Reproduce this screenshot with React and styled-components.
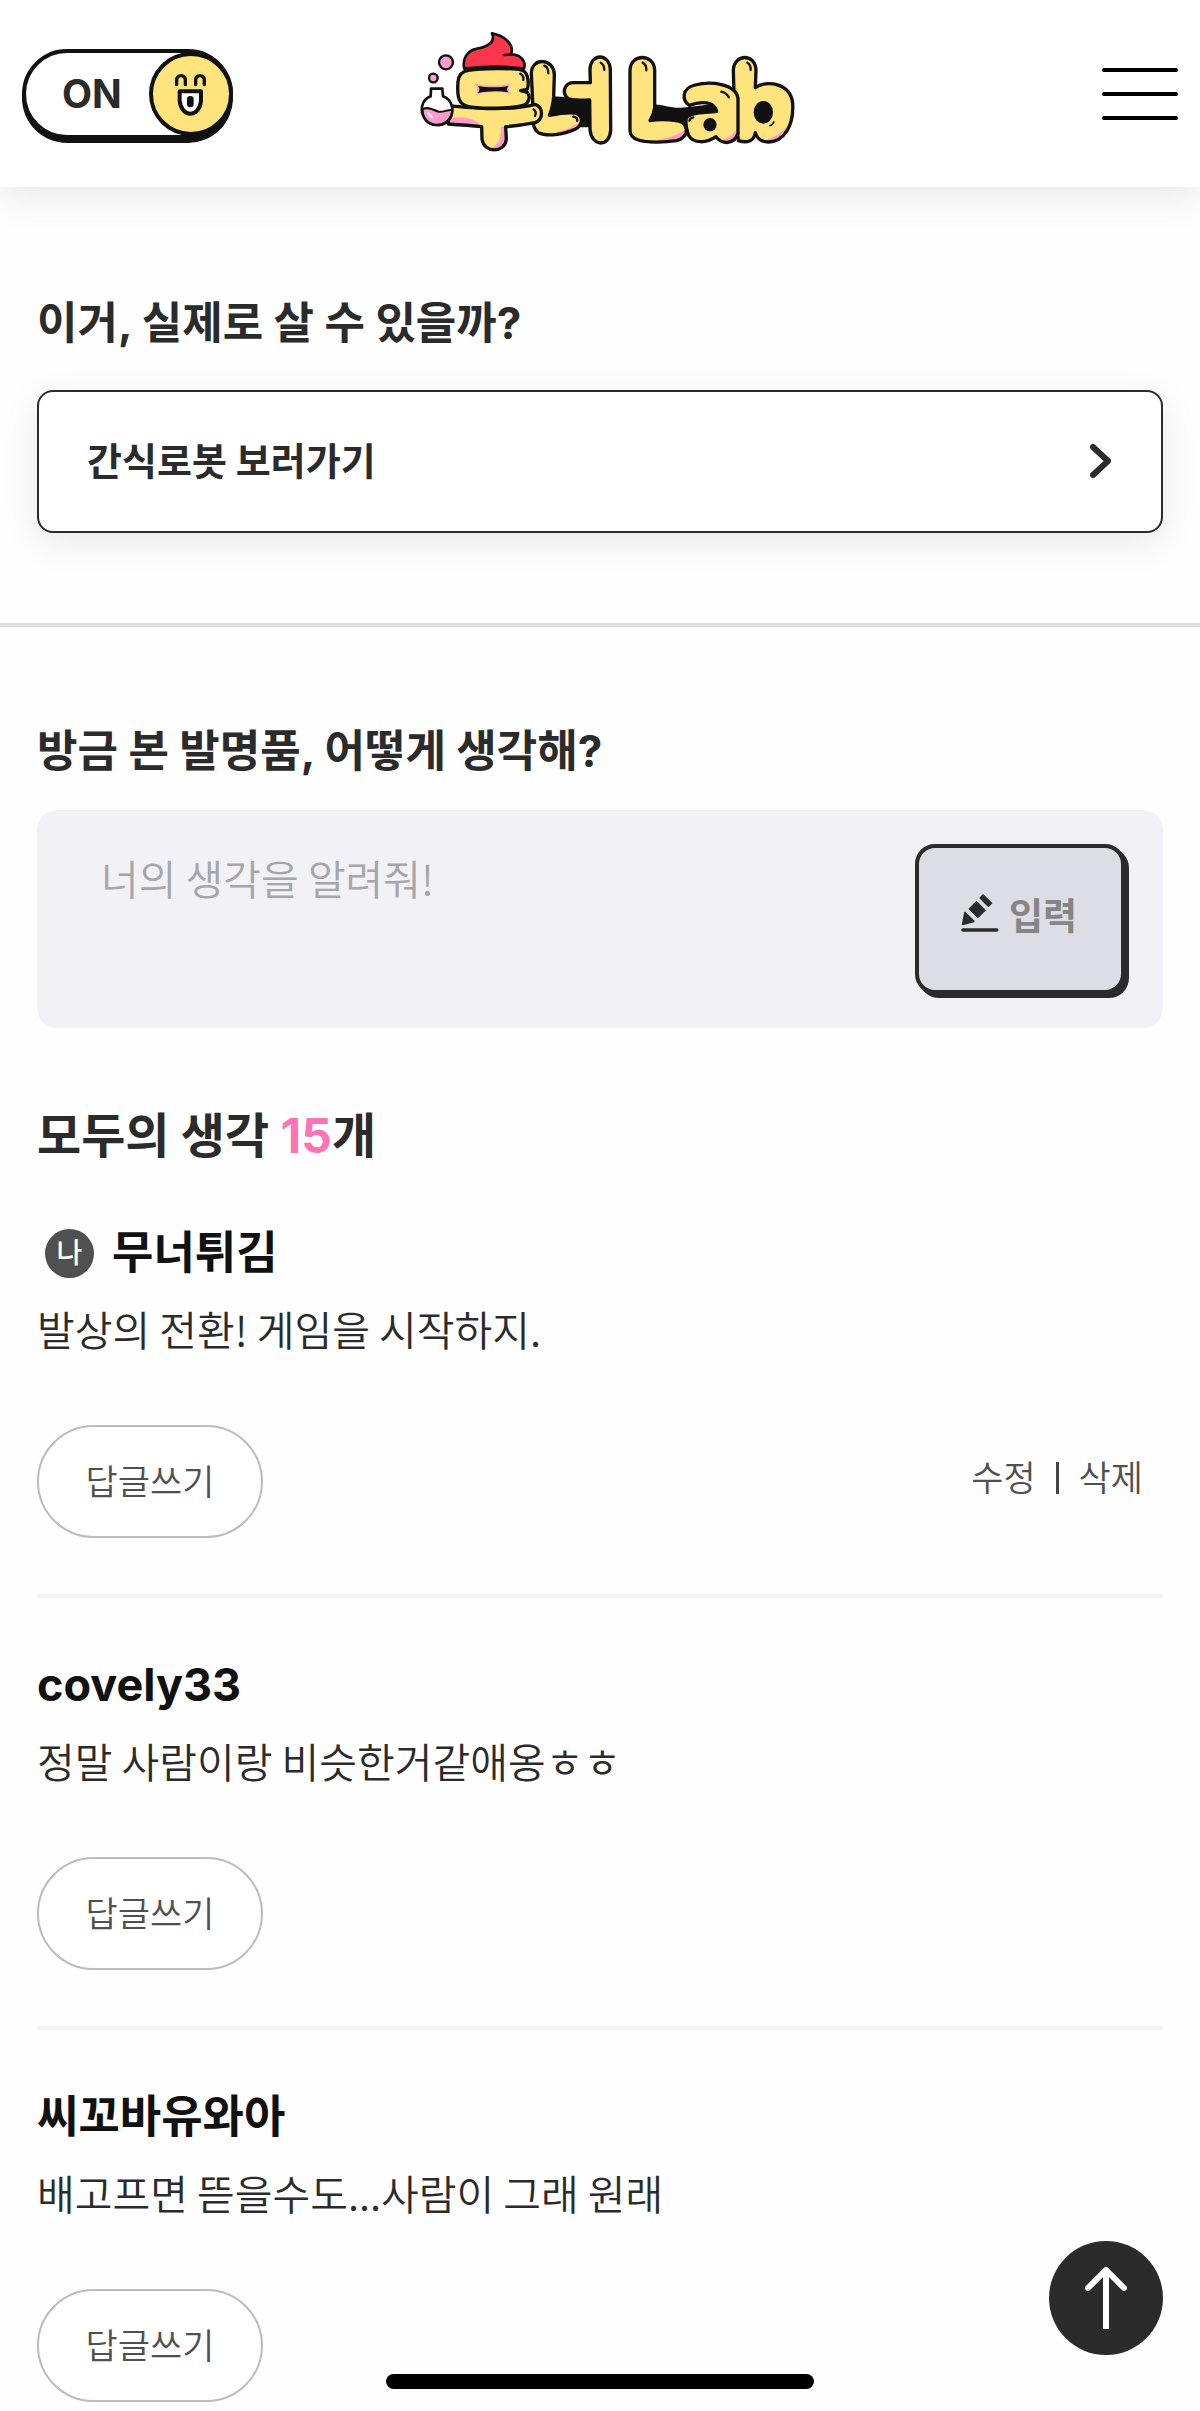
import React from "react";
import styled, { createGlobalStyle } from "styled-components";

const ink = "#2b2b2b";
const black = "#111111";
const yellow = "#ffe47e";
const pink = "#ff9ccb";

const GlobalStyle = createGlobalStyle`
  *, *::before, *::after { box-sizing: border-box; }
  body {
    margin: 0;
    background: #fefefe;
    color: ${ink};
    font-family: Inter, "Noto Sans CJK KR", sans-serif;
  }
  button, textarea { font-family: inherit; }
  button { cursor: pointer; margin: 0; line-height: 48px; }
`;

const Header = styled.header`
  display: grid;
  grid-template-columns: 1fr auto 1fr;
  align-items: center;
  height: 187px;
  padding: 0 22px;
  background: #fff;
  box-shadow: 0 10px 36px rgba(0, 0, 0, 0.09);
`;

const Toggle = styled.button`
  display: flex;
  align-items: center;
  justify-content: space-between;
  justify-self: start;
  width: 211px;
  height: 90px;
  padding: 0 0 0 36px;
  border: 4px solid ${black};
  border-radius: 45px;
  background: #fff;
  box-shadow: 0 4px 0 ${black};
  color: ${ink};
  font-size: 39px;
  font-weight: 700;
`;

const Knob = styled.span`
  display: flex;
  align-items: center;
  justify-content: center;
  width: 84px;
  height: 84px;
  margin-right: -4px;
  border: 4px solid ${black};
  border-radius: 50%;
  background: ${yellow};
`;

const MenuButton = styled.button`
  justify-self: end;
  display: flex;
  padding: 0;
  border: 0;
  background: none;
`;

const Section = styled.section`
  padding: ${(p) => p.$top}px 37px ${(p) => p.$bottom}px;
  border-bottom: ${(p) => (p.$divided ? "4px solid #e0e0e0" : "0")};
`;

const Title = styled.h2`
  margin: 0;
  font-size: ${(p) => (p.$large ? 48 : 44)}px;
  line-height: 60px;
  font-weight: 700;
`;

const Count = styled.span`
  color: #ff74b5;
`;

const LinkCard = styled.a`
  display: flex;
  align-items: center;
  justify-content: space-between;
  height: 143px;
  margin-top: 37px;
  padding: 0 48px 2px;
  border: 2px solid ${ink};
  border-radius: 16px;
  background: #fff;
  box-shadow: 0 10px 36px rgba(0, 0, 0, 0.09);
  color: ${ink};
  font-size: 38px;
  line-height: 48px;
  font-weight: 700;
  text-decoration: none;
`;

const Composer = styled.form`
  display: flex;
  align-items: flex-start;
  gap: 24px;
  height: 218px;
  margin: 29px 0 78px;
  padding: 34px 38px 34px 64px;
  border-radius: 20px;
  background: #f2f1f6;
`;

const Field = styled.textarea`
  flex: 1;
  min-width: 0;
  height: 150px;
  padding: 3px 0;
  border: 0;
  outline: 0;
  resize: none;
  background: transparent;
  color: ${ink};
  font-family: "Noto Sans CJK KR", sans-serif;
  font-size: 41px;
  font-weight: 350;
  line-height: 60px;
  &::placeholder { color: #a6a6a8; opacity: 1; }
`;

const Submit = styled.button`
  display: flex;
  align-items: center;
  justify-content: center;
  gap: 10px;
  width: 210px;
  height: 150px;
  padding: 0 2px 4px 0;
  border: 4px solid ${ink};
  border-radius: 20px;
  background: #dddde5;
  box-shadow: 4px 4px 0 ${ink};
  color: #858585;
  font-size: 37px;
  font-weight: 700;
`;

const PencilIcon = styled.svg`
  margin-bottom: 8px;
`;

const List = styled.ul`
  margin: 0;
  padding: 0;
  list-style: none;
`;

const Item = styled.li`
  padding: 57px 0 56px;
  border-bottom: 4px solid #f2f1f6;
  &:last-child { padding-bottom: 8px; border-bottom: 0; }
`;

const Author = styled.h3`
  display: flex;
  align-items: center;
  gap: 18px;
  margin: 0;
  color: ${black};
  font-size: 45px;
  line-height: 60px;
  font-weight: 700;
`;

const MeBadge = styled.span`
  display: flex;
  align-items: center;
  justify-content: center;
  width: 49px;
  height: 49px;
  margin-left: 8px;
  border-radius: 50%;
  background: #505050;
  color: #fff;
  font-size: 28px;
  line-height: 28px;
  font-weight: 500;
`;

const Message = styled.p`
  margin: 15px 0 67px;
  font-family: "Noto Sans CJK KR", sans-serif;
  font-size: 41px;
  line-height: 60px;
  font-weight: 350;
`;

const ItemFooter = styled.div`
  display: flex;
  align-items: center;
  justify-content: space-between;
`;

const Reply = styled.button`
  width: 226px;
  height: 113px;
  padding: 0;
  border: 2px solid #bcbcbc;
  border-radius: 57px;
  background: #fff;
  color: #505050;
  font-size: 35px;
  font-weight: 350;
`;

const Actions = styled.div`
  display: flex;
  align-items: center;
  gap: 20px;
  padding: 0 20px 8px 0;
`;

const Action = styled.button`
  padding: 0;
  border: 0;
  background: none;
  color: #505050;
  font-size: 35px;
  font-weight: 350;
`;

const Bar = styled.span`
  width: 3px;
  height: 32px;
  background: #444;
`;

const TopButton = styled.button`
  position: fixed;
  right: 37px;
  bottom: 56px;
  display: flex;
  align-items: center;
  justify-content: center;
  width: 114px;
  height: 114px;
  padding: 0;
  border: 0;
  border-radius: 50%;
  background: ${ink};
`;

const HomeIndicator = styled.div`
  position: fixed;
  left: 50%;
  bottom: 22px;
  width: 428px;
  height: 15px;
  margin-left: -214px;
  border-radius: 8px;
  background: #000;
`;

function Bubble({ d, children }) {
  return (
    <g>
      <path d={d} fill={yellow} />
      {children}
      <path d={d} fill="none" stroke={black} strokeWidth="10" strokeLinejoin="round" />
    </g>
  );
}

function Shine({ d }) {
  return <path d={d} fill="none" stroke={black} strokeWidth="7" strokeLinecap="round" />;
}

function Logo() {
  return (
    <svg width="394" height="128" viewBox="9 30 1182 384" role="img" aria-label="무너 Lab">
      <path d="M458 230C490 226 520 240 574 240V322H540L450 290Z" fill={black} />
      <path d="M760 254C785 250 810 268 860 262L960 250V285L870 300L850 312L745 304Z" fill={black} />
      <Bubble d="M400 290L394 160C394 112 462 112 463 165L461 230C459 258 455 270 448 286C480 280 520 274 535 283C552 295 545 318 525 328C490 345 440 350 415 338C400 328 398 310 400 290Z">
        <path d="M470 336C505 326 530 318 540 302C550 325 520 340 470 342Z" fill={pink} />
      </Bubble>
      <Shine d="M433 137Q445 142 445 160" />
      <Shine d="M520 290Q533 292 532 303" />
      <Bubble d="M571 188L570 150C570 98 630 98 631 150L632 330C630 382 576 382 570 330L569 240C545 240 510 244 500 232C484 212 498 188 520 188Z" />
      <Shine d="M602 128Q613 134 613 150" />
      <Bubble d="M145 257C200 262 240 266 285 266C330 266 370 262 405 253C430 260 432 298 405 308C375 314 345 318 317 320L319 358C314 400 252 400 246 358L245 320C205 316 175 314 145 312Z">
        <path d="M140 296C180 288 232 292 243 320L140 313Z" fill={pink} />
        <path d="M302 320H320V355C316 382 295 388 270 386C298 374 306 350 302 320Z" fill={pink} />
      </Bubble>
      <Shine d="M401 268Q411 275 405 288" />
      <Bubble d="M205 151C250 144 335 144 365 150C388 157 386 195 382 208L362 212L382 217C392 228 388 248 372 255C340 266 240 268 200 258C170 250 172 215 174 185C176 165 185 154 205 151Z" />
      <path d="M222 190C250 200 305 200 332 190C323 202 323 210 334 221C305 213 250 214 226 226C235 211 234 202 222 190Z" fill={pink} />
      <path d="M232 197C260 203 300 203 326 198C319 205 320 210 326 217C296 211 260 213 233 219C241 210 240 204 232 197Z" fill={black} />
      <Shine d="M361 161Q372 167 370 180" />
      <path d="M193 146C186 118 200 92 232 86C262 80 288 66 276 40C310 46 345 72 333 103C355 103 380 118 372 146C320 138 245 140 193 146Z" fill="#fb364c" stroke={black} strokeWidth="8" strokeLinejoin="round" />
      <path d="M335 103L312 105" stroke={black} strokeWidth="8" strokeLinecap="round" />
      <circle cx="138" cy="127" r="21" fill={pink} stroke={black} strokeWidth="7" />
      <circle cx="100" cy="174" r="13" fill={pink} stroke={black} strokeWidth="7" />
      <path d="M93 206H127L129 229C155 238 165 270 150 294C132 322 90 322 73 294C57 266 68 238 92 229Z" fill="#fff" />
      <path d="M68 268C85 258 100 270 115 275C130 278 142 268 156 270C158 300 138 316 111 316C85 315 66 298 68 268Z" fill={pink} stroke={black} strokeWidth="6" />
      <path d="M93 206H127L129 229C155 238 165 270 150 294C132 322 90 322 73 294C57 266 68 238 92 229Z" fill="none" stroke={black} strokeWidth="8" strokeLinejoin="round" />
      <path d="M85 280L96 292" stroke="#fff" strokeWidth="6" strokeLinecap="round" />
      <Bubble d="M690 330L690 150C692 100 762 100 764 150L764 262C762 280 757 290 750 302C780 296 840 298 852 312C868 335 855 355 830 362C790 368 740 368 715 360C695 354 690 345 690 330Z">
        <path d="M750 362C800 358 835 346 856 328C862 355 835 370 750 368Z" fill={pink} />
      </Bubble>
      <Shine d="M728 128Q740 134 739 151" />
      <Bubble d="M1002 225L1000 150C1003 100 1066 100 1068 150L1066 203C1100 178 1172 190 1178 250C1182 320 1150 366 1105 366C1085 366 1070 355 1066 338C1062 364 1040 370 1015 362Z">
        <path d="M1083 364C1125 355 1158 330 1172 303C1165 350 1135 372 1083 364Z" fill={pink} />
      </Bubble>
      <ellipse cx="1090" cy="277" rx="29" ry="34" fill={black} />
      <Shine d="M1042 128Q1053 134 1052 150" />
      <path d="M1108 318Q1120 313 1122 304" fill="none" stroke={black} strokeWidth="5" />
      <Bubble d="M868 256C845 240 845 205 885 195C930 183 1008 190 1014 235L1014 340C1004 374 965 375 948 350C920 370 880 372 865 345C860 325 852 305 862 290C885 272 920 280 950 274C944 242 900 244 868 256Z">
        <path d="M960 362C985 355 1000 345 1010 328V362L980 371Z" fill={pink} />
      </Bubble>
      <circle cx="930" cy="314" r="20" fill={black} />
      <Shine d="M964 215Q980 219 986 232" />
      <Shine d="M868 302Q871 293 880 292" />
    </svg>
  );
}

function Face() {
  return (
    <svg width="34" height="44" viewBox="0 0 102 132" fill="none" stroke={black} strokeLinecap="round" aria-hidden="true">
      <path d="M8 38V25C8 6 34 6 34 25V38M65 38V25C65 6 91 6 91 25V38" strokeWidth="10" />
      <path d="M17 58H81V86C77 138 21 138 17 86Z" fill="#fff" strokeWidth="12" strokeLinejoin="round" />
      <path d="M49 82V96" strokeWidth="20" />
    </svg>
  );
}

function Pencil() {
  return (
    <PencilIcon width="38" height="38" viewBox="305 338 115 115" fill={ink} stroke={ink} strokeWidth="5" strokeLinejoin="round" aria-hidden="true">
      <path d="M317 394L344 421L310 430Z" />
      <path d="M352 360L379 387L356 410L329 383Z" strokeWidth="3" />
      <path d="M372 341L397 366L388 375L363 350Z" />
      <rect x="308" y="444" width="108" height="6" rx="3" />
    </PencilIcon>
  );
}

const comments = [
  { author: "무너튀김", text: "발상의 전환! 게임을 시작하지.", mine: true },
  { author: "covely33", text: "정말 사람이랑 비슷한거같애옹ㅎㅎ" },
  { author: "씨꼬바유와아", text: "배고프면 뜯을수도...사람이 그래 원래" },
];

function Comment({ author, text, mine }) {
  return (
    <Item>
      <Author>
        {mine && <MeBadge>나</MeBadge>}
        {author}
      </Author>
      <Message>{text}</Message>
      <ItemFooter>
        <Reply type="button">답글쓰기</Reply>
        {mine && (
          <Actions>
            <Action type="button">수정</Action>
            <Bar />
            <Action type="button">삭제</Action>
          </Actions>
        )}
      </ItemFooter>
    </Item>
  );
}

export default function App() {
  return (
    <>
      <GlobalStyle />
      <Header>
        <Toggle type="button" role="switch" aria-checked="true">
          ON
          <Knob>
            <Face />
          </Knob>
        </Toggle>
        <Logo />
        <MenuButton type="button" aria-label="메뉴">
          <svg width="76" height="54" viewBox="0 0 76 54" stroke="#000" strokeWidth="4" strokeLinecap="round" aria-hidden="true">
            <path d="M2 3H74M2 27H74M2 51H74" />
          </svg>
        </MenuButton>
      </Header>
      <main>
        <Section $top={106} $bottom={90} $divided>
          <Title>이거, 실제로 살 수 있을까?</Title>
          <LinkCard href="#robot">
            간식로봇 보러가기
            <svg width="24" height="36" viewBox="0 0 24 36" fill="none" stroke={ink} strokeWidth="6" strokeLinecap="round" strokeLinejoin="round" aria-hidden="true">
              <path d="M4 4L19 18L4 32" />
            </svg>
          </LinkCard>
        </Section>
        <Section $top={94} $bottom={0}>
          <Title as="label" htmlFor="opinion">방금 본 발명품, 어떻게 생각해?</Title>
          <Composer onSubmit={(e) => e.preventDefault()}>
            <Field id="opinion" placeholder="너의 생각을 알려줘!" />
            <Submit type="submit">
              <Pencil />
              입력
            </Submit>
          </Composer>
          <Title $large>
            모두의 생각 <Count>15</Count>개
          </Title>
          <List>
            {comments.map((c) => (
              <Comment key={c.author} {...c} />
            ))}
          </List>
        </Section>
      </main>
      <TopButton type="button" aria-label="맨 위로">
        <svg width="44" height="64" viewBox="0 0 44 64" fill="none" stroke="#fff" strokeWidth="6" strokeLinejoin="round" aria-hidden="true">
          <path d="M22 4V63" />
          <path d="M4 22L22 4L40 22" strokeLinecap="round" />
        </svg>
      </TopButton>
      <HomeIndicator />
    </>
  );
}
